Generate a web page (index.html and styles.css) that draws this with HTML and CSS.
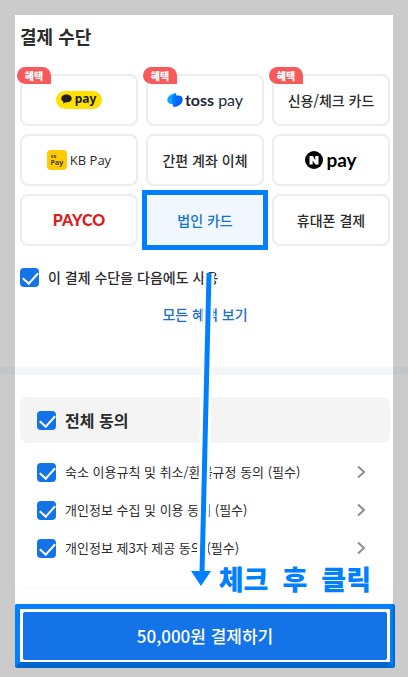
FILE: index.html
```html
<!DOCTYPE html>
<html lang="ko">
<head>
<meta charset="utf-8">
<meta name="viewport" content="width=device-width, initial-scale=1">
<title>결제 수단</title>
<link rel="stylesheet" href="styles.css">
</head>
<body>
<main class="page">
  <section class="payment">
    <h1 class="title">결제 수단</h1>
    <div class="methods">
      <button class="method" type="button">
        <span class="badge">혜택</span>
        <span class="kakao">
          <svg width="11" height="10" viewBox="0 0 11 10" aria-hidden="true"><path d="M5.500 .5C2.500 .5.300 2.200.300 4.400c0 1.400.9 2.600 2.300 3.300L2.200 9.800l2.500-1.600.8.1c3 0 5.200-1.700 5.200-3.900S8.500.5 5.500.5z" fill="#231c1c"/></svg>
          <span>pay</span>
        </span>
      </button>
      <button class="method" type="button">
        <span class="badge">혜택</span>
        <span class="toss">
          <svg width="16" height="16" viewBox="0 0 16 16" aria-hidden="true">
            <path d="M8.500 1C4 2 .3 4.500.3 8c0 2.500 2 4 4.500 4H7z" fill="#12a5ff"/>
            <path d="M6.500 15C12 14.500 15.700 11.500 15.700 7.500 15.700 5 14 3.500 11.500 3.500H8.500z" fill="#0064ff"/>
            <path d="M8.500 1C4.500 4 4 8.500 6.500 15 10 11 10.500 6 8.500 1z" fill="#0078ff"/>
          </svg>
          <span><b>toss</b> pay</span>
        </span>
      </button>
      <button class="method" type="button"><span class="badge">혜택</span>신용/체크 카드</button>
      <button class="method" type="button">
        <span class="kb"><span class="kb-mark"><small>KB</small><b>Pay</b></span>KB Pay</span>
      </button>
      <button class="method" type="button">간편 계좌 이체</button>
      <button class="method" type="button">
        <span class="npay">
          <svg width="18" height="18" viewBox="0 0 18 18" aria-hidden="true"><circle cx="9" cy="9" r="9" fill="#000"/><path d="M4.500 5h3.200l2.600 3.900V5h3.200v8.500h-3.200L7.700 9.600v3.900H4.500z" fill="#fff"/></svg>
          <span>pay</span>
        </span>
      </button>
      <button class="method" type="button"><span class="payco">PAYCO</span></button>
      <button class="method selected" type="button">법인 카드</button>
      <button class="method" type="button">휴대폰 결제</button>
    </div>
    <label class="check remember"><input type="checkbox" checked>이 결제 수단을 다음에도 사용</label>
    <a class="benefits" href="#benefits">모든 혜택 보기</a>
  </section>

  <div class="divider"></div>

  <section class="agreements">
    <label class="check all"><input type="checkbox" checked>전체 동의</label>
    <div class="term">
      <label class="check"><input type="checkbox" checked>숙소 이용규칙 및 취소/환불규정 동의 (필수)</label>
      <a href="#rules" aria-label="숙소 이용규칙"><svg width="10" height="14" viewBox="0 0 10 14"><path d="M2 1.500l6 5.500-6 5.500"/></svg></a>
    </div>
    <div class="term">
      <label class="check"><input type="checkbox" checked>개인정보 수집 및 이용 동의 (필수)</label>
      <a href="#privacy" aria-label="개인정보 수집"><svg width="10" height="14" viewBox="0 0 10 14"><path d="M2 1.500l6 5.500-6 5.500"/></svg></a>
    </div>
    <div class="term">
      <label class="check"><input type="checkbox" checked>개인정보 제3자 제공 동의 (필수)</label>
      <a href="#third-party" aria-label="제3자 제공"><svg width="10" height="14" viewBox="0 0 10 14"><path d="M2 1.500l6 5.500-6 5.500"/></svg></a>
    </div>
  </section>

  <footer class="footer">
    <div class="frame"><button class="submit" type="button">50,000원 결제하기</button></div>
  </footer>

  <svg class="arrow" width="32" height="320" viewBox="0 0 32 320" aria-hidden="true">
    <path d="M21 3L14 300" stroke="#fff" stroke-width="11" fill="none"/>
    <path d="M3 301h20l-10 15z" fill="#007fff" stroke="#fff" stroke-width="4" paint-order="stroke"/>
    <path d="M21 3L14 303" stroke="#007fff" stroke-width="5" fill="none"/>
  </svg>
  <p class="note"><span>체크</span> <span>후</span> <span>클릭</span></p>
</main>
</body>
</html>
```
FILE: styles.css
```css
* {
  box-sizing: border-box;
}

body {
  margin: 0;
  padding: 15px;
  background: #cbcbcb;
  color: #2b2b2b;
  font-family: "Noto Sans CJK KR", "Noto Sans", sans-serif;
  font-size: 14px;
  font-weight: 500;
  line-height: 20px;
}

button {
  font: inherit;
  color: inherit;
  cursor: pointer;
}

a {
  text-decoration: none;
}

.page {
  position: relative;
  background: #fff;
}

.payment {
  display: flex;
  flex-direction: column;
  padding: 9px 3px 43px 5px;
}

.title {
  margin: 0 0 26px;
  font-size: 18px;
  font-weight: 700;
  line-height: 24px;
}

.methods {
  display: grid;
  grid-template-columns: repeat(3, 1fr);
  gap: 8px;
}

.method {
  position: relative;
  display: flex;
  align-items: center;
  justify-content: center;
  height: 52px;
  padding: 0;
  border: 2px solid #ededed;
  border-radius: 8px;
  background: #fff;
  white-space: nowrap;
}

.method.selected {
  border-color: #fff;
  border-radius: 0;
  outline: 5px solid #007fff;
  outline-offset: -1px;
  background: #f0f7ff;
  background-clip: padding-box;
  color: #1673d0;
}

.badge {
  position: absolute;
  top: -9px;
  left: -5px;
  width: 34px;
  height: 17px;
  border-radius: 9px 9px 0 9px;
  background: #f65a5b;
  color: #fff;
  font-size: 10px;
  font-weight: 900;
  line-height: 17px;
}

.kakao,
.toss,
.kb,
.npay {
  display: flex;
  align-items: center;
}

.kakao {
  gap: 3px;
  height: 18px;
  padding: 0 6px 2px 5px;
  border-radius: 9px;
  background: #fee102;
  color: #231c1c;
  font-family: "Noto Sans", sans-serif;
  font-size: 12px;
  font-weight: 700;
}

.toss {
  gap: 2px;
  color: #202936;
  font-family: Lato, sans-serif;
  font-size: 16px;
  font-weight: 400;
}

.kb {
  gap: 3px;
  font-family: "Open Sans", sans-serif;
  font-size: 13px;
}

.kb-mark {
  display: flex;
  flex-direction: column;
  justify-content: center;
  width: 20px;
  height: 20px;
  border-radius: 4px;
  background: #fdcb02;
  color: #4b402c;
  font-size: 7px;
  line-height: 7px;
}

.kb-mark small {
  padding-left: 4px;
  font-size: 4px;
  font-weight: 700;
  line-height: 5px;
  text-align: left;
}

.npay {
  gap: 3px;
  color: #000;
  font-family: Lato, sans-serif;
  font-size: 19px;
  font-weight: 700;
}

.payco {
  color: #d9211c;
  font-family: Lato, sans-serif;
  font-size: 16px;
  font-weight: 900;
}

.check {
  display: flex;
  align-items: center;
  gap: 9px;
}

.check input {
  position: relative;
  flex: none;
  appearance: none;
  width: 19px;
  height: 19px;
  margin: 0;
  border-radius: 4px;
  background: #1473e6;
}

.check input:checked::after {
  content: "";
  position: absolute;
  top: 1px;
  left: 6px;
  width: 7px;
  height: 13px;
  border: solid #fff;
  border-width: 0 2px 2px 0;
  transform: rotate(42deg);
}

.remember {
  margin-top: 21px;
}

.benefits {
  align-self: center;
  margin-top: 17px;
  color: #1b6fc4;
}

.divider {
  height: 8px;
  margin: 0 -15px;
  border: solid #c3c5ca;
  border-width: 0 15px;
  background: #f5f6fb;
}

.agreements {
  padding: 22px 3px 22px 5px;
}

.all {
  height: 46px;
  margin-bottom: 10px;
  padding-left: 17px;
  border-radius: 8px;
  background: #f4f4f4;
  font-size: 16px;
  font-weight: 700;
}

.term {
  display: flex;
  align-items: center;
  justify-content: space-between;
  height: 38px;
  padding: 0 24px 0 17px;
  font-size: 13px;
}

.term .check {
  font-weight: 400;
}

.term a {
  display: flex;
}

.term path {
  fill: none;
  stroke: #8e8e8e;
  stroke-width: 2;
}

.footer {
  padding-top: 15px;
  box-shadow: 0 -3px 8px rgba(0, 0, 0, 0.02);
}

.frame {
  margin-bottom: -6px;
  padding: 3px 3px 2px;
  border: 5px solid #007fff;
  border-right-width: 3px;
  border-bottom: 6px solid #0067cf;
  border-radius: 2px;
  background: #fff;
  box-shadow: 2px 0 0 #0067cf;
}

.submit {
  display: block;
  width: 100%;
  height: 48px;
  border: 0;
  border-radius: 2px;
  background: #1473e6;
  color: #fff;
  font-size: 17px;
}

.arrow {
  position: absolute;
  top: 255px;
  left: 173px;
}

.note {
  position: absolute;
  top: 548px;
  right: 22px;
  display: flex;
  gap: 14px;
  margin: 0;
  color: #007fff;
  font-size: 27px;
  font-weight: 900;
  line-height: 32px;
  -webkit-text-stroke: 4px #fff;
  paint-order: stroke fill;
}
```
